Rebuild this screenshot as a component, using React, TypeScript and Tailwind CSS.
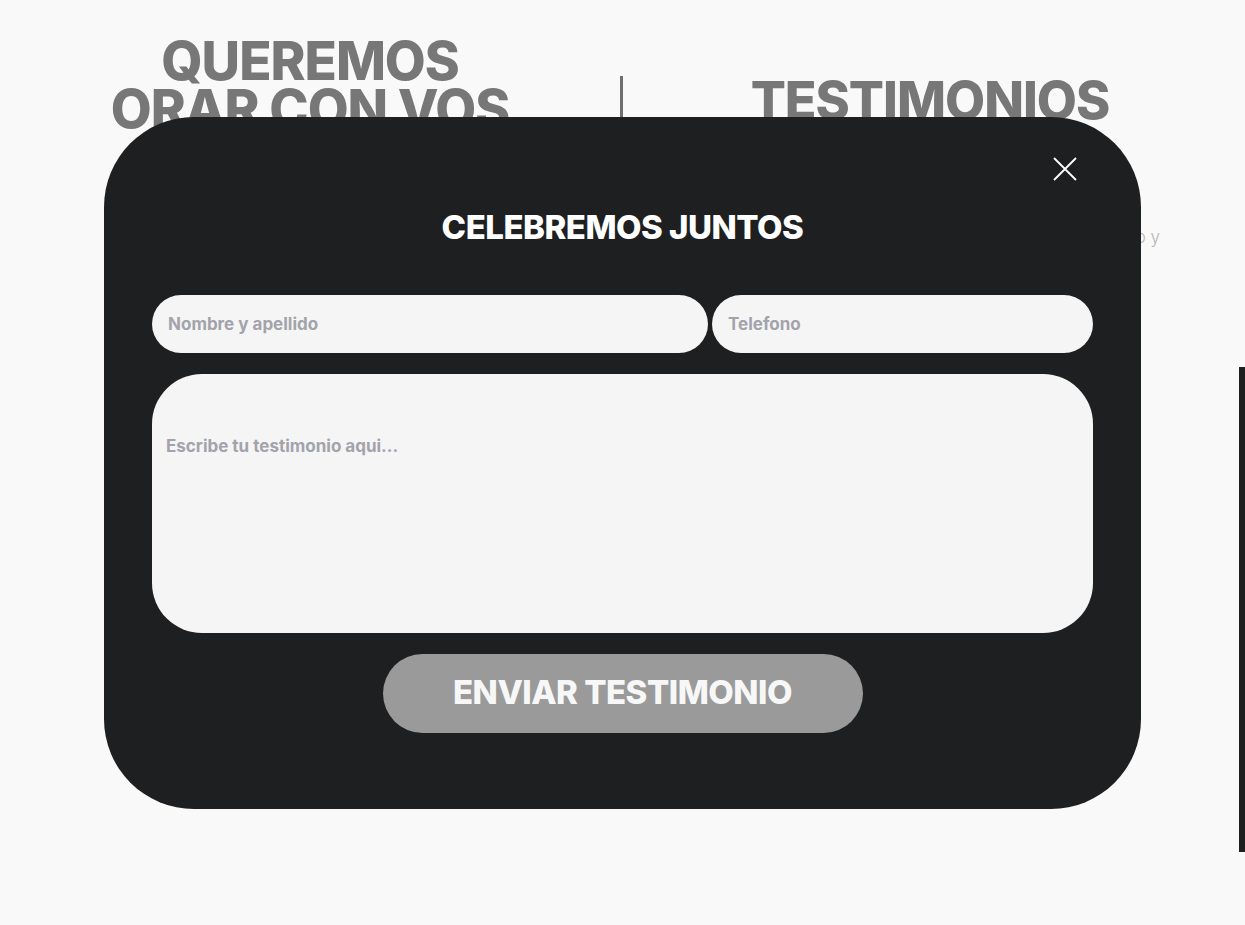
export default function App() {
  return (
    <div className="relative h-[925px] w-full overflow-hidden bg-[#f9f9f9]" style={{ fontFamily: 'Inter, "Noto Sans", sans-serif' }}>
      <div className="flex items-start pt-[37px]">
        <div className="w-[620px] text-center">
          <h2 className="text-[53px] font-extrabold uppercase leading-[48px] tracking-[-1px] text-[#777777]">
            Queremos
            <br />
            Orar con vos
          </h2>
        </div>
        <div className="mt-[39px] h-[60px] w-[3px] bg-[#6f6f6f]" />
        <div className="flex-1">
          <h2 className="mt-[34px] pr-[8px] text-center text-[52px] font-extrabold uppercase leading-[60px] tracking-[-1px] text-[#777777]">
            Testimonios
          </h2>
          <p className="mt-[94px] pr-[85px] text-right text-[17px] font-light text-[#b5b5b5]">
            compartí tu testimonio y
          </p>
        </div>
      </div>
      <div className="absolute right-0 top-[367px] h-[485px] w-[6px] bg-[#1e201f]" />

      <div className="fixed inset-0 flex items-center justify-center">
        <div className="relative flex h-[692px] w-[1037px] flex-col rounded-[90px] bg-[#1e1f21] px-[48px] pt-[88px]">
          <button className="absolute right-[62px] top-[38px] p-[2px]" aria-label="Cerrar">
            <svg width="24" height="24" viewBox="0 0 24 24" fill="none" stroke="#ffffff" strokeWidth="1.8">
              <path d="M1 1 L23 23 M23 1 L1 23" />
            </svg>
          </button>
          <h3 className="text-center text-[33px] font-extrabold uppercase leading-[44px] tracking-[-0.5px] text-white">
            Celebremos juntos
          </h3>
          <div className="mt-[46px] flex gap-[4px]">
            <input
              className="h-[58px] w-[556px] rounded-full bg-[#f5f5f5] px-[16px] text-[17px] font-bold text-[#333] outline-none placeholder:text-[#a3a3ab]"
              placeholder="Nombre y apellido"
            />
            <input
              className="h-[58px] flex-1 rounded-full bg-[#f5f5f5] px-[16px] text-[17px] font-bold text-[#333] outline-none placeholder:text-[#a3a3ab]"
              placeholder="Telefono"
            />
          </div>
          <textarea
            className="mt-[21px] h-[259px] w-full resize-none rounded-[50px] bg-[#f5f5f5] px-[14px] pt-[60px] text-[17px] font-bold text-[#333] outline-none placeholder:text-[#a3a3ab]"
            placeholder="Escribe tu testimonio aqui..."
          />
          <div className="mt-[21px] flex justify-center">
            <button className="h-[79px] w-[480px] rounded-full bg-[#9a9a9a] text-[33px] font-extrabold uppercase tracking-[-0.5px] text-[#f7f7f7]">
              Enviar testimonio
            </button>
          </div>
        </div>
      </div>
    </div>
  )
}
